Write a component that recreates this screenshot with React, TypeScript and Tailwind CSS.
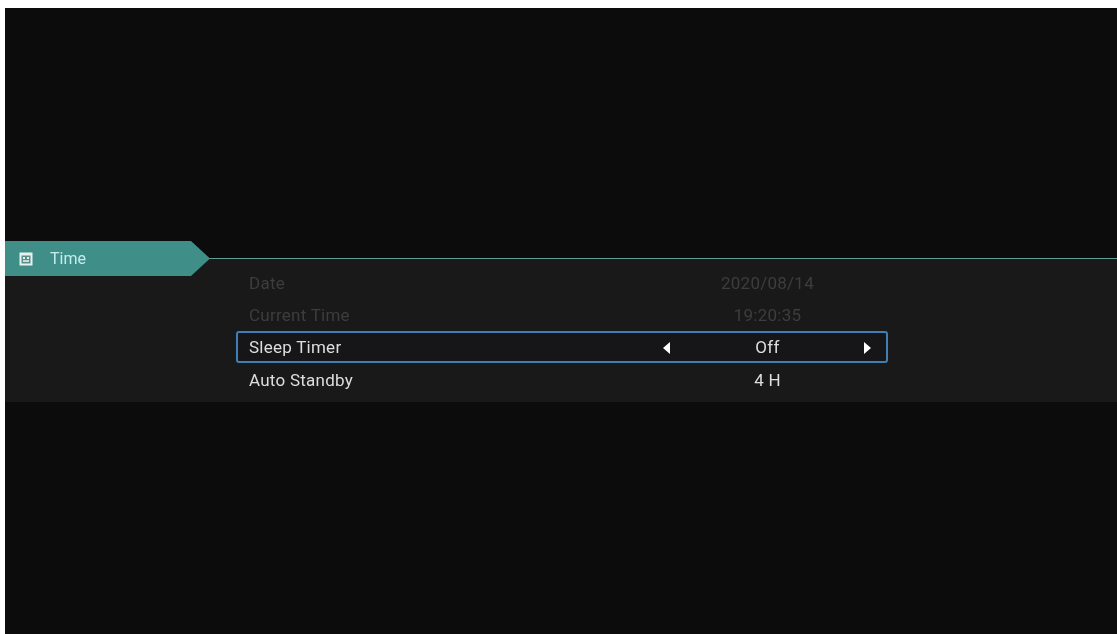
import { ReactNode } from 'react';

// One settings row: label on the left, centred value, optional arrows when focused
function Row({
  label,
  value,
  disabled,
  focused,
  className = '',
}: {
  label: string;
  value: string;
  disabled?: boolean;
  focused?: boolean;
  className?: string;
}) {
  const tone = disabled ? 'text-[#3d3d3d]' : 'text-[#dedede]';
  return (
    <div
      className={`flex h-[32px] w-[652px] items-center rounded-[3px] border-2 pl-[11px] pt-[1px] ${
        focused ? 'border-[#3f7fb5] bg-[#161518]' : 'border-transparent'
      } ${tone} ${className}`}
    >
      <span className="w-[414px] shrink-0 tracking-[0.25px] blur-[0.5px]">{label}</span>
      <div className="flex w-[208px] items-center justify-between">
        <Arrow show={focused}>
          <path d="M7 0v12L0 6z" />
        </Arrow>
        <span className="pl-[1px] tracking-[0.25px] blur-[0.5px]">{value}</span>
        <Arrow show={focused}>
          <path d="M0 0v12l7-6z" />
        </Arrow>
      </div>
    </div>
  );
}

function Arrow({ show, children }: { show?: boolean; children: ReactNode }) {
  return (
    <svg width="7" height="12" viewBox="0 0 7 12" className={show ? 'fill-white' : 'invisible'}>
      {children}
    </svg>
  );
}

export default function App() {
  return (
    <div className="h-[634px] w-[1117px] overflow-hidden bg-white pl-[5px] pt-[8px] font-['Roboto',sans-serif] text-[17px]">
      <div className="h-[626px] bg-[#0c0c0c] pt-[250px]">
        <div className="relative h-[144px] border-t border-[#5f9e95] bg-[#191919] pl-[231px] pt-[8px]">
          {/* Section tab sits over the panel's top line */}
          <div className="absolute left-0 top-[-18px] flex h-[35px] w-[205px] items-center bg-[#3f8f88] pl-[14px] text-[16px] text-[#c4ecec] [clip-path:polygon(0_0,186px_0,205px_50%,186px_100%,0_100%)]">
            <svg width="14" height="14" viewBox="0 0 14 14" className="mr-[17px] shrink-0">
              <rect x="0.5" y="0.5" width="13" height="13" fill="#e6f1f0" />
              <rect x="2.5" y="3.5" width="9" height="8" fill="#5c8f8b" />
              <rect x="4" y="5" width="2" height="2" fill="#e6f1f0" />
              <rect x="8" y="5" width="2" height="2" fill="#e6f1f0" />
              <rect x="4" y="8" width="6" height="2" fill="#c4dcda" />
            </svg>
            <span className="blur-[0.5px]">Time</span>
          </div>
          <Row label="Date" value="2020/08/14" disabled />
          <Row label="Current Time" value="19:20:35" disabled />
          <Row label="Sleep Timer" value="Off" focused />
          <Row label="Auto Standby" value="4 H" className="mt-[1px]" />
        </div>
      </div>
    </div>
  );
}
